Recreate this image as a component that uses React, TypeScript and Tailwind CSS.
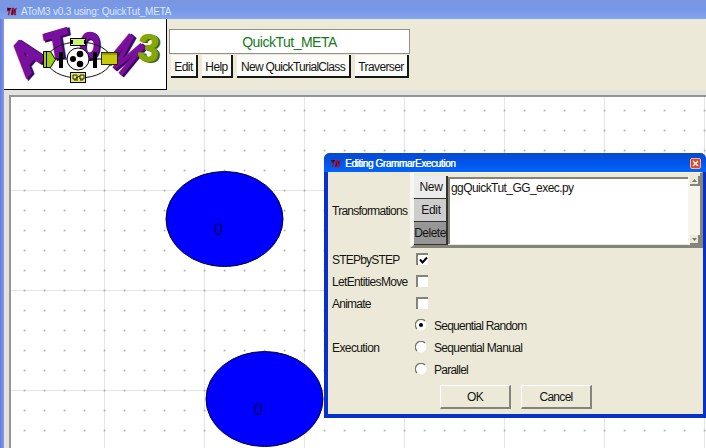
import type { ReactNode } from "react";

const lines = [104, 204, 304, 404, 504, 604, 704];
const rows = [190, 290, 390];
const dots: [number, number][] = [];
for (let y = 110; y < 448; y += 20) {
  for (let x = 24; x < 706; x += 20) dots.push([x, y]);
}

function TkIcon({ className = "" }: { className?: string }) {
  return (
    <svg className={className} width="10" height="9" viewBox="0 0 10 9">
      <path d="M0 1h4l-1 3-1 4H1l1-4H0zM5 1h2v2l2-2h1L8 4l1 4H7L6 5v3H4z" fill="#a30f36" stroke="#a30f36" strokeWidth=".4" />
      <path d="M0 1h4l-2 3zM4 8l2-6v4zM8 2l1 4-2-2z" fill="#22142f" />
    </svg>
  );
}

function Logo() {
  return (
    <svg width="162" height="70" viewBox="4 19 162 70">
      <g fontFamily="Liberation Sans, sans-serif" fontWeight="bold" strokeLinejoin="miter">
        <g fill="#41055c" stroke="#41055c" strokeWidth="4">
          <text transform="matrix(.66 -.74 .68 .88 28 78)" fontSize="38">A</text>
          <text transform="matrix(1.02 -.3 .17 1 50 61)" fontSize="36">T</text>
          <text transform="translate(80 58) rotate(4) scale(.72 1)" fontSize="35">O</text>
          <text transform="matrix(.57 .5 -.84 1.02 107 61)" fontSize="39" strokeWidth="2">M</text>
        </g>
        <g fill="#78109f" stroke="#78109f" strokeWidth="3">
          <text transform="matrix(.66 -.74 .68 .88 26 77)" fontSize="38">A</text>
          <text transform="matrix(1.02 -.3 .17 1 48 60)" fontSize="36">T</text>
          <text transform="translate(79 57) rotate(4) scale(.72 1)" fontSize="35">O</text>
          <text transform="matrix(.57 .5 -.84 1.02 105 60)" fontSize="39" strokeWidth="1">M</text>
        </g>
        <text transform="translate(139 61) rotate(5)" fontSize="38" fill="#496300" stroke="#496300">3</text>
        <text transform="translate(137 60) rotate(5)" fontSize="38" fill="#83a80c" stroke="#83a80c">3</text>
      </g>
      <ellipse cx="79" cy="60" rx="32" ry="18" fill="none" stroke="#111" />
      <path d="M53 59H106" stroke="#000" />
      <path d="M59 52h4v16h-4zM93 52h4v16h-4z" fill="#000" />
      <path d="M43.500 51.500h7l5 8-5 8h-7z" fill="#9cce16" stroke="#000" />
      <path d="M46.500 52v15" stroke="#000" />
      <circle cx="78" cy="59" r="11" fill="#fff" stroke="#000" />
      <circle cx="80" cy="54" r="3.300" />
      <circle cx="73" cy="59" r="3" />
      <circle cx="80" cy="64" r="3.300" />
      <rect x="70.500" y="38.500" width="15" height="7" fill="#cff56a" stroke="#000" />
      <path d="M71 40h2v4h-2zM84 40h2v4h-2z" />
      <rect x="70.500" y="72.500" width="15" height="10" fill="#e7e95b" stroke="#000" />
      <path d="M73 75h4v4h-4zm7 0h4v4h-4zM76 78l4-2M74 80h4M80 80h3" fill="none" stroke="#222" />
      <rect x="101.500" y="52.500" width="16" height="12" fill="#c8c909" stroke="#222800" />
      <path d="M101 54h16" stroke="#686a00" />
    </svg>
  );
}

function MenuButton({ children, width }: { children: ReactNode; width: string }) {
  return (
    <button className={`${width} flex h-[23px] shrink-0 items-center justify-center border-r-2 border-b-2 border-[#171713] bg-[#fbfbf8] pt-[2px] text-[12px] whitespace-nowrap`}>
      {children}
    </button>
  );
}

function Check({ on = false }: { on?: boolean }) {
  return (
    <span className="flex size-[12px] items-center justify-center border-t-2 border-l-2 border-[#85847b] bg-white">
      {on && (
        <svg width="9" height="9" viewBox="0 0 9 9">
          <path d="M1 3.500L3.500 6.500L8 1.500" fill="none" stroke="#000" strokeWidth="2" />
        </svg>
      )}
    </span>
  );
}

function Radio({ on = false }: { on?: boolean }) {
  return (
    <svg width="12" height="12" viewBox="0 0 12 12">
      <circle cx="6" cy="6" r="5.500" fill="#fff" />
      <path d="M2 10A5.300 5.300 0 0 1 10 2" fill="none" stroke="#77766e" strokeWidth="1.300" />
      {on && <circle cx="6" cy="6" r="2" />}
    </svg>
  );
}

function Arrow({ down = false }: { down?: boolean }) {
  return (
    <span className="flex h-[10px] w-[10px] items-center justify-center border-r-2 border-b-2 border-[#85847b] bg-[#ece9d8]">
      <svg width="5" height="3" viewBox="0 0 5 3">
        <path d={down ? "M0 0h5L2.500 3z" : "M0 3h5L2.500 0z"} fill="#77766e" />
      </svg>
    </span>
  );
}

function Dialog() {
  return (
    <section className="absolute top-[153px] left-[324px] flex h-[265px] w-[382px] flex-col rounded-t-[6px] bg-[#0831c9] pr-[3px] pb-[4px] pl-[4px]">
      <header className="-mr-[3px] -ml-[4px] flex h-[19px] shrink-0 items-center rounded-t-[6px] bg-linear-to-b from-[#0848cf] via-[#0055e9] to-[#0564fb] pt-[2px] pr-[5px] pl-[7px]">
        <TkIcon />
        <h2 className="ml-[4px] text-[10px] tracking-[-0.38px] text-white [text-shadow:0.4px_0_white]">Editing GrammarExecution</h2>
        <button className="ml-auto flex size-[11px] items-center justify-center rounded-[2px] border border-[#f5b3a4] bg-[#dd4926]">
          <svg width="7" height="7" viewBox="0 0 7 7">
            <path d="M1 1l5 5M6 1L1 6" stroke="#fff" strokeWidth="1.400" />
          </svg>
        </button>
      </header>
      <div className="flex min-h-0 flex-1 flex-col bg-[#ece9d8] text-[12px]">
        <div className="flex h-[76px] shrink-0">
          <div className="flex w-[82px] items-center pt-[2px] pl-[4px] tracking-[-0.74px]">Transformations</div>
          <div className="flex w-[293px] border-t border-r-[3px] border-b-[3px] border-l-4 border-t-[#f7f6ef] border-r-[#85847b] border-b-[#85847b] border-l-[#f7f6ef] pt-[3px]">
            <div className="flex w-[34px] flex-col text-center leading-[22px] tracking-[-0.35px]">
              <button className="h-[23px] border-r-2 border-b border-[#34332e] bg-[#ececec] pl-[2px]">New</button>
              <button className="h-[23px] border-r-2 border-b border-[#34332e] bg-[#cdcdcd] pl-[2px]">Edit</button>
              <button className="h-[23px] border-r-2 border-b border-[#34332e] bg-[#969696] tracking-[-0.5px]">Delete</button>
            </div>
            <div className="mt-px h-[67px] flex-1 border-t-2 border-l-2 border-[#85847b] bg-white pl-px leading-[18px] tracking-[-0.56px]">ggQuickTut_GG_exec.py</div>
            <div className="flex w-[12px] flex-col justify-between bg-[#f7f4e9] pl-[2px]">
              <Arrow />
              <Arrow down />
            </div>
          </div>
        </div>
        <div className="grid grid-cols-[84px_1fr] grid-rows-[22px_22px_22px] items-center pl-[4px]">
          <span className="pt-px tracking-[-0.8px]">STEPbySTEP</span><Check on />
          <span className="pt-px tracking-[-0.65px]">LetEntitiesMove</span><Check />
          <span className="pt-px tracking-[-0.75px]">Animate</span><Check />
        </div>
        <div className="flex h-[66px] items-center pl-[4px]">
          <span className="w-[83px] pt-px tracking-[-0.6px]">Execution</span>
          <div className="flex flex-col">
            <label className="flex h-[22px] items-center gap-[7px]"><Radio on /><span className="pt-px tracking-[-0.76px]">Sequential Random</span></label>
            <label className="flex h-[22px] items-center gap-[7px]"><Radio /><span className="pt-px tracking-[-0.66px]">Sequential Manual</span></label>
            <label className="flex h-[22px] items-center gap-[7px]"><Radio /><span className="pt-px tracking-[-0.75px]">Parallel</span></label>
          </div>
        </div>
        <div className="flex gap-[10px] pt-[5px] pl-[112px]">
          <button className="h-[24px] w-[71px] border-t border-r-2 border-b-2 border-l border-t-white border-r-[#85847b] border-b-[#85847b] border-l-white pt-px tracking-[-0.6px]">OK</button>
          <button className="h-[24px] w-[71px] border-t border-r-2 border-b-2 border-l border-t-white border-r-[#85847b] border-b-[#85847b] border-l-white pt-px tracking-[-0.7px]">Cancel</button>
        </div>
      </div>
    </section>
  );
}

export default function App() {
  return (
    <main className="relative flex h-[448px] w-[706px] flex-col overflow-hidden bg-[#e2e2df] font-['Liberation_Sans',Arial,sans-serif] text-[#151512]">
      <header className="flex h-[19px] shrink-0 items-center bg-linear-to-b from-[#7b96e0] via-[#7697e7] to-[#83a5ef] pt-[4px] pl-[7px]">
        <TkIcon />
        <h1 className="ml-[4px] text-[10px] tracking-[-0.2px] whitespace-nowrap text-[#dce8ff]">AToM3 v0.3 using: QuickTut_META</h1>
      </header>
      <div className="flex min-h-0 flex-1">
        <div className="w-[4px] shrink-0 bg-linear-to-r from-[#657ad8] to-[#849ae9]" />
        <div className="flex min-w-0 flex-1 flex-col">
          <div className="flex h-[71px] shrink-0 bg-[#ece9d8]">
            <div className="w-[163px] shrink-0 border-r border-b border-black bg-white"><Logo /></div>
            <div className="flex flex-col pt-[10px] pl-[2px]">
              <div className="flex h-[25px] w-[241px] items-center justify-center border border-[#92918a] bg-white pt-px text-[14px] tracking-[-0.5px] text-[#157a18]">QuickTut_META</div>
              <div className="flex gap-[4px] pt-px pl-[2px]">
                <MenuButton width="w-[27px] tracking-[-0.5px]">Edit</MenuButton>
                <MenuButton width="w-[31px] tracking-[-0.6px]">Help</MenuButton>
                <MenuButton width="w-[114px] tracking-[-0.68px]">New QuickTurialClass</MenuButton>
                <MenuButton width="w-[54px] tracking-[-0.6px]">Traverser</MenuButton>
              </div>
            </div>
          </div>
          <div className="min-h-0 flex-1 pt-[5px] pl-[5px]">
            <div className="h-full border-t-2 border-l-2 border-[#959595] bg-white">
              <svg className="block" width="695" height="351" viewBox="11 97 695 351">
                {lines.map((x) => <path key={x} d={`M${x + 0.5} 97V448`} stroke="#e5e5e5" />)}
                {rows.map((y) => <path key={y} d={`M11 ${y + 0.5}H706`} stroke="#e5e5e5" />)}
                {dots.map(([x, y]) => <rect key={`${x}-${y}`} x={x - 0.3} y={y - 0.3} width="1.700" height="1.700" fill="#acacac" />)}
                <g fill="#0000ff" stroke="#000035">
                  <ellipse cx="224.500" cy="219" rx="58.500" ry="47.500" />
                  <ellipse cx="264.500" cy="399" rx="58.500" ry="47.500" />
                </g>
                <g fill="#000060" fontFamily="Liberation Sans, sans-serif" fontSize="16">
                  <text x="214" y="235">0</text>
                  <text x="254" y="415">0</text>
                </g>
              </svg>
            </div>
          </div>
        </div>
      </div>
      <Dialog />
    </main>
  );
}
